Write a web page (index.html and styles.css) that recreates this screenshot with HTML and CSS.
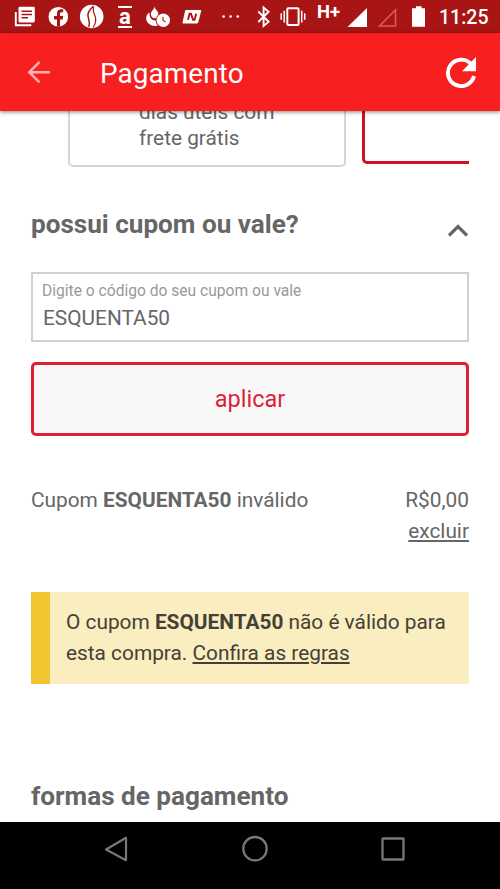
FILE: index.html
```html
<!DOCTYPE html>
<html lang="pt-BR">
<head>
<meta charset="utf-8">
<title>Pagamento</title>
<link rel="stylesheet" href="styles.css">
</head>
<body>
<div class="phone">
  <div class="status">
    <svg width="34" height="33" viewBox="8 0 34 33"><path d="M15.8 12v13.3h15.5" fill="none" stroke="#fff" stroke-width="1.9"/><rect x="18.5" y="6.8" width="16.3" height="15.7" rx="1.4" fill="#fff"/><path d="M21.5 11.2h10.5M21.5 14.5h10.5M21.5 17.8h6.500" stroke="#a91414" stroke-width="1.5"/></svg>
    <svg width="32" height="33" viewBox="42 0 32 33"><circle cx="58.300" cy="16.800" r="9.800" fill="#fff"/><path d="M57 26.600v-7.100h-3v-3.400h3v-2.700c0-2.800 1.700-4.200 4.200-4.200h2v3h-1.500c-1.200 0-1.700.7-1.700 1.700v2.200h3.200l-.5 3.400H60v7.100z" fill="#a91414"/></svg>
    <svg width="36" height="33" viewBox="74 0 36 33"><circle cx="91.700" cy="16.500" r="11.800" fill="#fff"/><path d="M93.500 6c-4.500 4.500-7 7.500-5 12.500 1.200 3.200 1.200 5.500.3 8.500" fill="none" stroke="#a91414" stroke-width="1.500"/><path d="M93.500 7c-1 4.500.5 6.500 1.700 9.500 1.300 3.800.3 7.500-2.200 11" fill="none" stroke="#a91414" stroke-width="1.200"/></svg>
    <span class="shop">a</span>
    <svg width="36" height="33" viewBox="140 0 36 33"><path d="M154.500 6.500c-.5 3.500-4.200 4.800-3.500 8.500.5 2.400 2 3.200 3.500 3.200 3 0 5-3.200 3.300-6.300-.8-1.500-2.600-2.300-3.300-5.400z" fill="#fff"/><path d="M149.500 12.500c-3.500 2-4.200 6.500-2.200 9.500 2.400 4 8 5 11.700 3.300l1-6.300c-3.500 2.400-8 2-9.700-1.500-.8-1.700-.9-3.300-.8-5z" fill="#fff"/><circle cx="163.300" cy="20.300" r="7.600" fill="#a91414"/><circle cx="163.300" cy="20.300" r="6.700" fill="#fff"/><path d="M163 16.800v3.700l2.700 1.600" fill="none" stroke="#a91414" stroke-width="1.100"/></svg>
    <svg width="36" height="33" viewBox="176 0 36 33"><path d="M186 10h14.500q1 0 .7 1l-3 11.400q-.3 1-1.400 1h-13.400q-1.200 0-.9-1l2.500-11.200q.2-1.200 1-1.200z" fill="#fff"/><path d="M188 19.800l1.600-6h1.400l2 6h1.500l1.700-6" fill="none" stroke="#a91414" stroke-width="1.900"/></svg>
    <svg width="40" height="33" viewBox="212 0 40 33" fill="#fff"><circle cx="223.600" cy="16.500" r="1.300"/><circle cx="230.600" cy="16.500" r="1.300"/><circle cx="237.800" cy="16.500" r="1.300"/></svg>
    <svg width="24" height="33" viewBox="252 0 24 33"><path d="M258.300 11.500l10.300 10.200-5 4.300V7.500l5 4.300-10.300 10.200" fill="none" stroke="#fff" stroke-width="1.900"/></svg>
    <svg width="36" height="33" viewBox="276 0 36 33"><rect x="287.300" y="8.200" width="11.300" height="16.900" rx="1" fill="none" stroke="#fff" stroke-width="2"/><path d="M284.200 10.800v11.600M281.200 13.300v6.500M301.700 10.800v11.600M304.700 13.300v6.500" stroke="#fff" stroke-width="1.500"/></svg>
    <span class="net">H+</span>
    <svg width="29" height="33" viewBox="343 0 29 33"><path d="M367 8v19h-19.500z" fill="#fff"/></svg>
    <svg width="32" height="33" viewBox="372 0 32 33"><path d="M395.500 10v16h-16z" fill="none" stroke="#db5b5b" stroke-width="1.600"/></svg>
    <svg width="30" height="33" viewBox="404 0 30 33"><path d="M416 6.300h5.500v2h3.500v18.500h-13V8.300h4z" fill="#fff"/></svg>
    <span class="time">11:25</span>
  </div>
  <header class="appbar">
    <svg class="back" width="24" height="24" viewBox="0 0 24 24"><path d="M23 12.200H2.500M12.500 2L2.300 12.200l10.200 10.200" fill="none" stroke="#ffb3ae" stroke-width="2.500"/></svg>
    <h1 class="title">Pagamento</h1>
    <svg class="reload" width="32" height="32" viewBox="0 0 32 32"><path d="M29 20A13.200 13.200 0 1 1 25.500 7.500" fill="none" stroke="#fff" stroke-width="3.900"/><path d="M31 1v14.200H17z" fill="#fff"/></svg>
  </header>
  <main class="content">
    <div class="options">
      <div class="option"><p class="freight">dias úteis com<br>frete grátis</p></div>
      <div class="option selected"></div>
    </div>
    <div class="coupon-head">
      <h2>possui cupom ou vale?</h2>
      <svg width="22" height="16" viewBox="0 0 22 16"><path d="M2 13.500l9-9 9 9" fill="none" stroke="#666" stroke-width="3.200"/></svg>
    </div>
    <div class="field"><span class="label">Digite o código do seu cupom ou vale</span><span class="value">ESQUENTA50</span></div>
    <button class="apply">aplicar</button>
    <div class="result">
      <span class="result-name">Cupom <b>ESQUENTA50</b> inválido</span>
      <div class="amount"><span>R$0,00</span><u>excluir</u></div>
    </div>
    <div class="alert"><span class="alert-a">O cupom <b>ESQUENTA50</b> não é válido para</span><span class="alert-b">esta compra. <u>Confira as regras</u></span></div>
    <h2 class="methods">formas de pagamento</h2>
  </main>
  <nav class="navbar">
    <svg width="26" height="28" viewBox="0 0 26 28"><path d="M23 2.700v22.500L3 14.500z" fill="none" stroke="#777" stroke-width="2.200" stroke-linejoin="round"/></svg>
    <svg width="28" height="28" viewBox="0 0 28 28"><circle cx="14" cy="13.700" r="11.700" fill="none" stroke="#777" stroke-width="2.300"/></svg>
    <svg width="26" height="28" viewBox="0 0 26 28"><rect x="2.500" y="3.500" width="21" height="21" rx=".5" fill="none" stroke="#777" stroke-width="2.300"/></svg>
  </nav>
</div>
</body>
</html>
```
FILE: styles.css
```css
* { box-sizing: border-box; margin: 0; }
body { font-family: Roboto, "Liberation Sans", sans-serif; color: #666; background: #fff; }
svg { display: block; flex: none; }
.phone { width: 500px; height: 889px; display: flex; flex-direction: column; overflow: hidden; }
.status { flex: none; height: 33px; padding-left: 8px; display: flex; background: #a91414; color: #fff; }
.shop { width: 14px; height: 22px; margin: 6px 8px; border-top: 2px solid #fff; border-bottom: 2px solid #fff; font-size: 22px; font-weight: 700; line-height: 17px; text-align: center; }
.net { width: 31px; padding-left: 5px; font-size: 18.500px; font-weight: 700; line-height: 25px; }
.time { padding-left: 5px; font-size: 19.500px; font-weight: 500; line-height: 35px; white-space: nowrap; }
.appbar { flex: none; height: 78px; padding: 0 23px 0 27px; display: flex; align-items: center; background: #f71f1f; box-shadow: 0 1px 4px rgba(0,0,0,.5); z-index: 1; }
.back { margin-top: -1px; }
.title { margin: 3px 0 0 49px; flex: 1; font-size: 27.800px; font-weight: 400; line-height: 40px; color: #fff; letter-spacing: .15px; }
.content { flex: 1; min-height: 0; padding: 0 31px; }
.options { height: 56px; display: flex; align-items: flex-start; margin-left: 37px; overflow: hidden; }
.option { flex: none; width: 278px; height: 56px; border: 2px solid #d5d5d5; border-top: 0; border-radius: 0 0 5px 5px; }
.selected { width: 130px; height: 53px; margin-left: 16px; border: 3px solid #d01024; border-top: 0; }
.freight { margin: -12px 0 0 69px; font-size: 20.830px; line-height: 26px; }
h2 { font-size: 26.100px; font-weight: 700; line-height: 32px; white-space: nowrap; }
.coupon-head { height: 105px; padding-top: 41px; display: flex; justify-content: space-between; }
.coupon-head svg { margin: 14px 0 0; }
.field { height: 70px; padding: 8px 9px; display: flex; flex-direction: column; border: 2px solid #d0d0d0; }
.label { font-size: 15.600px; line-height: 18px; color: #999; }
.value { margin-left: 1px; font-size: 20.830px; line-height: 37px; }
.apply { display: block; width: 100%; height: 74px; margin-top: 20px; border: 3px solid #e01f33; border-radius: 5px; background: #f8f8f8; font-family: inherit; font-size: 23.500px; color: #db1f36; }
.result { height: 107px; margin-top: 49px; display: flex; justify-content: space-between; font-size: 20.830px; line-height: 31px; white-space: nowrap; }
.amount { display: flex; flex-direction: column; align-items: flex-end; }
u { text-underline-offset: 2px; }
.alert { height: 92px; padding: 15px 0 0 16px; border-left: 19px solid #f0c62f; background: #faedbf; color: #444038; font-size: 20.830px; line-height: 31px; white-space: nowrap; display: flex; flex-direction: column; }
.methods { margin-top: 96px; }
.navbar { flex: none; height: 67px; padding: 13px 94px 0 103px; display: flex; justify-content: space-between; background: #000; }
```
